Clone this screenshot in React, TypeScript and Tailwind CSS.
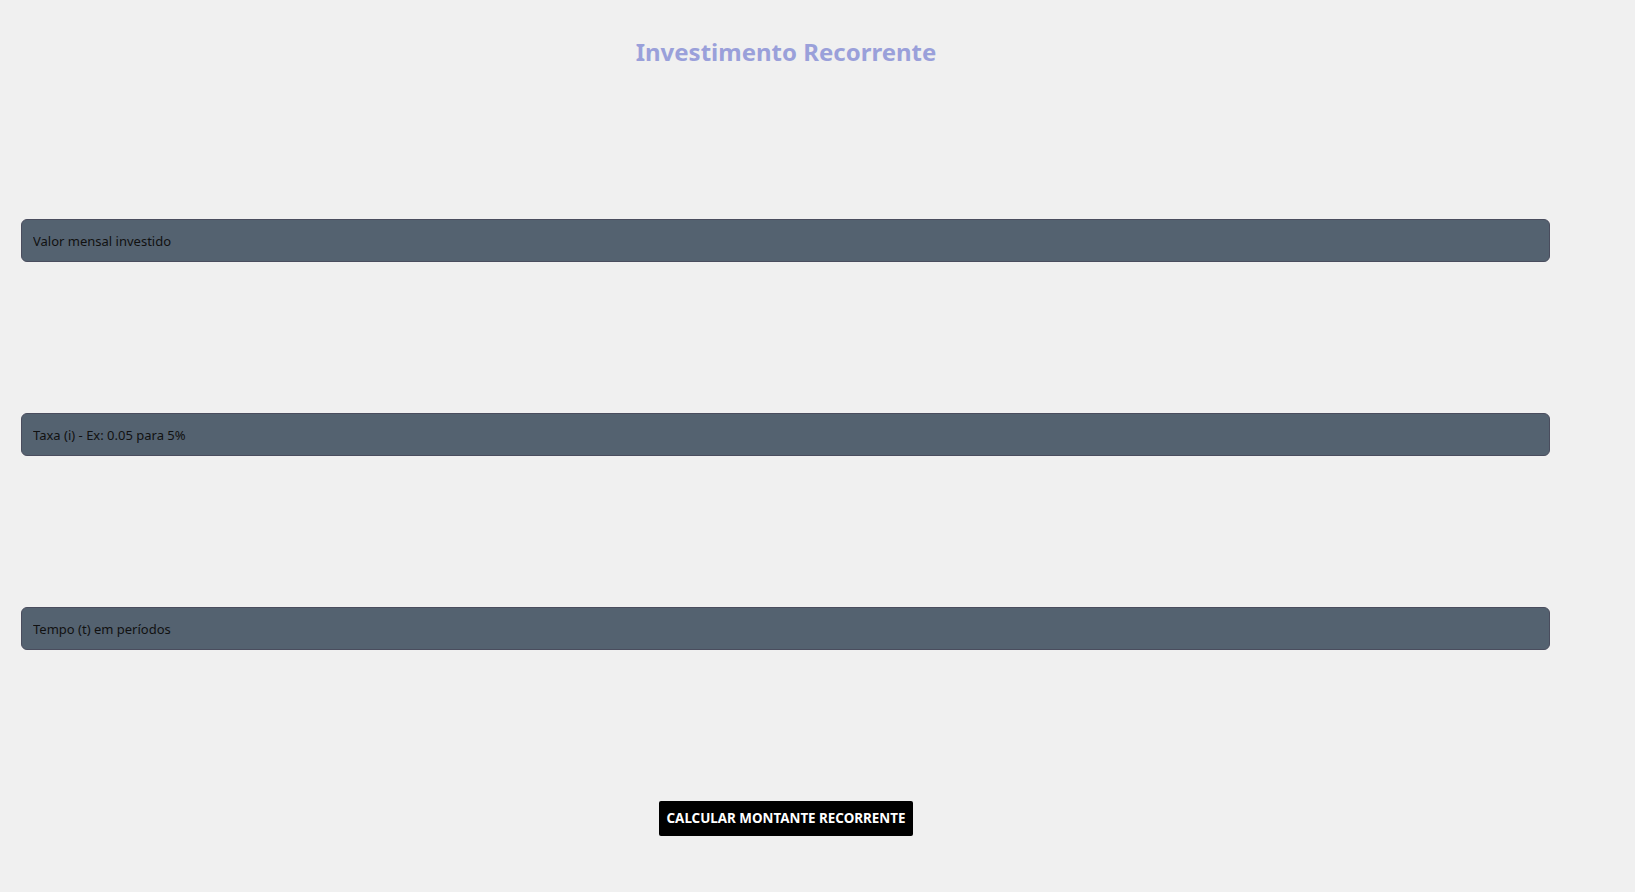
import React from "react";

export default function App() {
  const fields = [
    "Valor mensal investido",
    "Taxa (i) - Ex: 0.05 para 5%",
    "Tempo (t) em períodos",
  ];
  return (
    <div className="min-h-[892px] w-full bg-[#f0f0f0]" style={{ fontFamily: '"Noto Sans", "Open Sans", sans-serif' }}>
      <div className="w-[1572px] flex flex-col items-center">
        <h1 className="mt-[32px] h-[40px] leading-[40px] text-[24px] font-bold text-[#9aa0da]">
          Investimento Recorrente
        </h1>
        <div className="mt-[147px] flex flex-col gap-[151px] self-stretch pl-[21px]">
          {fields.map((f) => (
            <input
              key={f}
              placeholder={f}
              className="w-[1529px] h-[43px] rounded-[6px] border border-[#4a4d5e] bg-[#546270] px-[11px] text-[13px] text-black placeholder:text-[#111] outline-none"
            />
          ))}
        </div>
        <button className="mt-[151px] h-[35px] w-[254px] rounded-[2px] bg-black text-[13.4px] font-bold text-white">
          CALCULAR MONTANTE RECORRENTE
        </button>
      </div>
    </div>
  );
}
